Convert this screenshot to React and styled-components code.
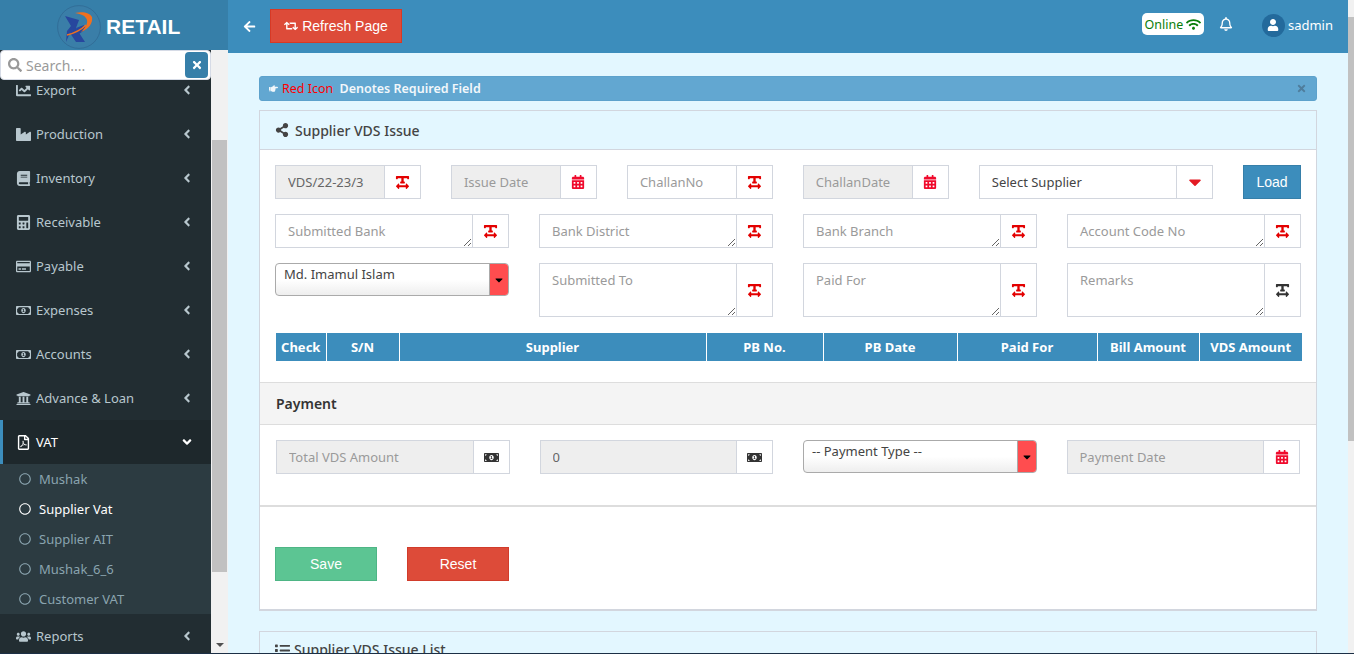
import React from 'react'
import styled, { createGlobalStyle } from 'styled-components'
import {
  FaArrowLeft, FaRetweet, FaWifi, FaRegBell, FaUser, FaSearch, FaTimes, FaChartLine, FaIndustry,
  FaBook, FaCalculator, FaRegCreditCard, FaRegMoneyBillAlt, FaUniversity, FaRegFilePdf, FaUsers,
  FaAngleLeft, FaAngleDown, FaRegCircle, FaShareAlt, FaTextWidth, FaCalendarAlt, FaCaretDown,
  FaMoneyBillAlt, FaList, FaHandPointRight,
} from 'react-icons/fa'

const font = `"Noto Sans", "Liberation Sans", sans-serif`

const GlobalStyle = createGlobalStyle`
  html, body { margin: 0; padding: 0; height: 100%; overflow: hidden; }
  * { box-sizing: border-box; }
  body { font-family: ${font}; font-size: 13px; color: #333; }
  input::placeholder, textarea::placeholder { color: #9a9a9a; opacity: 1; }
`

const menu = [
  { label: 'Export', Icon: FaChartLine },
  { label: 'Production', Icon: FaIndustry },
  { label: 'Inventory', Icon: FaBook },
  { label: 'Receivable', Icon: FaCalculator },
  { label: 'Payable', Icon: FaRegCreditCard },
  { label: 'Expenses', Icon: FaRegMoneyBillAlt },
  { label: 'Accounts', Icon: FaRegMoneyBillAlt },
  { label: 'Advance & Loan', Icon: FaUniversity },
]

const vatItems = ['Mushak', 'Supplier Vat', 'Supplier AIT', 'Mushak_6_6', 'Customer VAT']

const columns = [
  ['Check', 50], ['S/N', 73], ['Supplier', 307], ['PB No.', 117], ['PB Date', 134],
  ['Paid For', 140], ['Bill Amount', 102], ['VDS Amount', 103],
]

const Logo = () => (
  <svg width="44" height="44" viewBox="0 0 44 44">
    <circle cx="22" cy="22" r="21.4" fill="#3a7ea8" stroke="#2f6790" strokeWidth="0.7" />
    <path d="M8 11 L22 15 L19 23 L28 37 L19 37 L13 28 L9 37 L10 26 L14 21 Z" fill="#27479e" />
    <path d="M19 23 L27 20 L29 24 L22 29 Z" fill="#27479e" />
    <path d="M18 8 C26 6 33 8 35 12 C36 18 32 24 24 27 C29 22 32 17 29 13 C27 10 23 9 18 8 Z" fill="#f0701f" />
    <path d="M10 30 C18 28 24 25 29 20" stroke="#f0701f" strokeWidth="1.4" fill="none" />
  </svg>
)

const App = () => (
  <>
    <GlobalStyle />
    <Page>
      <Sidebar>
        <Brand>
          <Logo />
          <BrandName>RETAIL</BrandName>
        </Brand>
        <SidebarBody>
          <SideNav>
            <SearchBox>
              <FaSearch />
              <SearchInput placeholder="Search...." />
              <SearchClear><FaTimes /></SearchClear>
            </SearchBox>
            <MenuList>
              {menu.map(({ label, Icon }) => (
                <MenuItem key={label}>
                  <Icon />
                  <MenuLabel>{label}</MenuLabel>
                  <FaAngleLeft />
                </MenuItem>
              ))}
              <MenuItem $active>
                <FaRegFilePdf />
                <MenuLabel>VAT</MenuLabel>
                <FaAngleDown />
              </MenuItem>
              <SubMenu>
                {vatItems.map((item) => (
                  <SubItem key={item} $current={item === 'Supplier Vat'}>
                    <FaRegCircle />
                    {item}
                  </SubItem>
                ))}
              </SubMenu>
              <MenuItem>
                <FaUsers />
                <MenuLabel>Reports</MenuLabel>
                <FaAngleLeft />
              </MenuItem>
            </MenuList>
          </SideNav>
          <SideScroll>
            <SideThumb />
            <ScrollArrow />
          </SideScroll>
        </SidebarBody>
      </Sidebar>

      <Main>
        <TopBar>
          <BackIcon><FaArrowLeft /></BackIcon>
          <RefreshButton><FaRetweet /> Refresh Page</RefreshButton>
          <TopRight>
            <OnlineBadge>Online <FaWifi /></OnlineBadge>
            <BellIcon><FaRegBell /></BellIcon>
            <UserMenu>
              <Avatar><FaUser /></Avatar>
              sadmin
            </UserMenu>
          </TopRight>
        </TopBar>

        <Content>
          <Alert>
            <FaHandPointRight />
            <RedText>Red Icon</RedText> Denotes Required Field
            <AlertClose><FaTimes /></AlertClose>
          </Alert>

          <Box>
            <BoxHeader><FaShareAlt /> Supplier VDS Issue</BoxHeader>
            <BoxBody>
              <FirstRow>
                <Field placeholder="VDS/22-23/3" readOnly filled icon="text" required dark />
                <Field placeholder="Issue Date" readOnly icon="date" />
                <Field placeholder="ChallanNo" icon="text" required />
                <Field placeholder="ChallanDate" readOnly icon="date" />
                <InputGroup>
                  <SupplierSelect>Select Supplier</SupplierSelect>
                  <Addon><FaCaretDown color="#e31b23" size={20} /></Addon>
                </InputGroup>
                <LoadButton>Load</LoadButton>
              </FirstRow>
              <FourRow>
                <AreaField placeholder="Submitted Bank" required />
                <AreaField placeholder="Bank District" required />
                <AreaField placeholder="Bank Branch" required />
                <AreaField placeholder="Account Code No" required />
              </FourRow>
              <TallRow>
                <ComboBox>
                  <ComboText>Md. Imamul Islam</ComboText>
                  <ComboArrow><FaCaretDown /></ComboArrow>
                </ComboBox>
                <AreaField placeholder="Submitted To" required tall />
                <AreaField placeholder="Paid For" required tall />
                <AreaField placeholder="Remarks" tall />
              </TallRow>
              <DataTable>
                <thead>
                  <tr>
                    {columns.map(([name, width]) => (
                      <th key={name} style={{ width }}>{name}</th>
                    ))}
                  </tr>
                </thead>
              </DataTable>
            </BoxBody>

            <PaymentPanel>
              <PaymentHeader>Payment</PaymentHeader>
              <PaymentBody>
                <Field placeholder="Total VDS Amount" readOnly icon="money" />
                <Field placeholder="0" readOnly icon="money" filled dark />
                <ComboBox>
                  <ComboText>-- Payment Type --</ComboText>
                  <ComboArrow><FaCaretDown /></ComboArrow>
                </ComboBox>
                <Field placeholder="Payment Date" readOnly icon="date" />
              </PaymentBody>
            </PaymentPanel>

            <Actions>
              <ActionButton $bg="#5cc593" $border="#4eb585">Save</ActionButton>
              <ActionButton $bg="#dd4b39" $border="#d13c2b">Reset</ActionButton>
            </Actions>
          </Box>

          <ListBox>
            <ListTitle><FaList /> Supplier VDS Issue List</ListTitle>
          </ListBox>
        </Content>
      </Main>
      <PageScroll>
        <PageThumb />
      </PageScroll>
    </Page>
  </>
)

const Field = ({ placeholder, readOnly, icon, required, dark }) => (
  <InputGroup>
    <TextInput placeholder={placeholder} readOnly={readOnly} $dark={dark} />
    <Addon>
      {icon === 'text' && <FaTextWidth color={required ? '#e30000' : '#333'} size={15} />}
      {icon === 'date' && <FaCalendarAlt color="#f00a2c" size={14} />}
      {icon === 'money' && <FaMoneyBillAlt color="#333" size={15} />}
    </Addon>
  </InputGroup>
)

const AreaField = ({ placeholder, required, tall }) => (
  <InputGroup $tall={tall}>
    <TextArea placeholder={placeholder} />
    <Addon>
      <FaTextWidth color={required ? '#e30000' : '#333'} size={15} />
    </Addon>
  </InputGroup>
)

const Page = styled.div`
  display: flex;
  width: 1354px;
  height: 654px;
  overflow: hidden;
  background: #e3f7ff;
  border-bottom: 1px solid #1c2f45;
`

const Sidebar = styled.aside`
  width: 228px;
  flex: none;
  display: flex;
  flex-direction: column;
  background: #f1f1f1;
`

const Brand = styled.div`
  height: 50px;
  flex: none;
  display: flex;
  align-items: center;
  gap: 5px;
  padding: 3px 0 0 57px;
  background: #367fa9;
`

const BrandName = styled.span`
  font-family: "Liberation Sans", Arial, sans-serif;
  font-size: 21px;
  font-weight: 700;
  color: #fff;
`

const SidebarBody = styled.div`
  flex: 1;
  display: flex;
  min-height: 0;
`

const SideNav = styled.nav`
  width: 211px;
  flex: none;
  background: #222d32;
  display: flex;
  flex-direction: column;
  overflow: hidden;
`

const SearchBox = styled.div`
  flex: none;
  position: relative;
  z-index: 2;
  height: 30px;
  display: flex;
  align-items: center;
  gap: 4px;
  padding: 0 2px 0 7px;
  background: #fff;
  border: 1px solid #d6dbe6;
  border-radius: 4px;
  color: #999;
  font-size: 14px;
`

const SearchInput = styled.input`
  flex: 1;
  min-width: 0;
  border: 0;
  outline: 0;
  padding: 0;
  font: 14px ${font};
  color: #555;
`

const SearchClear = styled.span`
  width: 23px;
  height: 26px;
  display: flex;
  align-items: center;
  justify-content: center;
  background: #367fa9;
  color: #fff;
  font-size: 12px;
  border-radius: 4px;
`

const MenuList = styled.div`
  margin-top: -12px;
  display: flex;
  flex-direction: column;
`

const MenuItem = styled.div`
  flex: none;
  height: 44px;
  display: flex;
  align-items: center;
  padding: 0 18px 0 ${(p) => (p.$active ? 13 : 16)}px;
  font-size: 13px;
  color: ${(p) => (p.$active ? '#fff' : '#b8c7ce')};
  background: ${(p) => (p.$active ? '#1e282c' : 'transparent')};
  border-left: ${(p) => (p.$active ? '3px solid #3c8dbc' : '0')};

  svg:first-child { width: 15px; height: 15px; flex: none; }
  svg:last-child { width: 12px; height: 14px; flex: none; }
`

const MenuLabel = styled.span`
  flex: 1;
  margin-left: 5px;
`

const SubMenu = styled.div`
  display: flex;
  flex-direction: column;
  background: #2c3b41;
`

const SubItem = styled.div`
  height: 30px;
  display: flex;
  align-items: center;
  gap: 8px;
  padding-left: 19px;
  font-size: 13px;
  color: ${(p) => (p.$current ? '#fff' : '#8aa4af')};

  svg { width: 12px; height: 12px; }
`

const SideScroll = styled.div`
  width: 17px;
  flex: none;
  padding: 0 1px;
  display: flex;
  flex-direction: column;
  justify-content: space-between;
  background: #f1f1f1;
`

const SideThumb = styled.div`
  margin-top: 90px;
  height: 432px;
  background: #c1c1c1;
`

const ScrollArrow = styled.div`
  align-self: center;
  margin-bottom: 6px;
  border-left: 4px solid transparent;
  border-right: 4px solid transparent;
  border-top: 4px solid #505050;
`

const Main = styled.main`
  flex: 1;
  min-width: 0;
  display: flex;
  flex-direction: column;
`

const TopBar = styled.header`
  height: 53px;
  flex: none;
  display: flex;
  align-items: center;
  padding: 0 15px 0 15px;
  background: #3c8dbc;
  color: #fff;
`

const BackIcon = styled.span`
  display: flex;
  font-size: 13px;
  margin-right: 14px;
`

const RefreshButton = styled.button`
  width: 132px;
  height: 34px;
  padding: 0;
  margin-top: -1px;
  display: flex;
  align-items: center;
  justify-content: center;
  gap: 4px;
  background: #dd4b39;
  border: 1px solid #d73925;
  color: #fff;
  font: 14px "Liberation Sans", Arial, sans-serif;
`

const TopRight = styled.div`
  margin-left: auto;
  display: flex;
  align-items: center;
`

const OnlineBadge = styled.span`
  height: 22px;
  width: 62px;
  margin-top: -5px;
  display: flex;
  align-items: center;
  justify-content: center;
  gap: 3px;
  background: #fff;
  border-radius: 5px;
  color: #0a7d0a;
  font-size: 12.5px;
  white-space: nowrap;

  svg { width: 15px; height: 13px; }
`

const BellIcon = styled.span`
  display: flex;
  margin: -5px 0 0 15px;
  font-size: 14px;
`

const UserMenu = styled.div`
  display: flex;
  align-items: center;
  gap: 3px;
  margin: -3px 0 0 29px;
  font-size: 13px;
`

const Avatar = styled.span`
  width: 23px;
  height: 23px;
  display: flex;
  align-items: center;
  justify-content: center;
  border-radius: 50%;
  background: #236a9c;
  font-size: 12px;
`

const Content = styled.div`
  flex: 1;
  min-height: 0;
  padding: 23px 31px 0;
  display: flex;
  flex-direction: column;
`

const Alert = styled.div`
  flex: none;
  height: 25px;
  display: flex;
  align-items: center;
  gap: 3px;
  padding: 0 9px 0 8px;
  background: #62a7d1;
  border: 1px solid #5da2cc;
  border-radius: 3px;
  color: #f2f7fb;
  font-size: 12.5px;
  font-weight: 600;
  white-space: pre-wrap;

  & > svg:first-child { width: 11px; height: 9px; }
`

const RedText = styled.span`
  color: #f00;
  font-weight: 400;
`

const AlertClose = styled.span`
  margin-left: auto;
  display: flex;
  color: #4f7d9c;
  font-size: 11px;
`

const Box = styled.section`
  flex: none;
  height: 501px;
  margin-top: 9px;
  background: #fff;
  border: 1px solid #d2d6de;
  border-bottom-width: 2px;
  display: flex;
  flex-direction: column;
`

const BoxHeader = styled.h3`
  margin: 0;
  height: 39px;
  flex: none;
  display: flex;
  align-items: center;
  gap: 6px;
  padding: 0 15px;
  background: #e3f7ff;
  border-bottom: 1px solid #d2d6de;
  font-size: 14px;
  font-weight: 500;
  color: #444;

  svg { width: 14px; height: 14px; }
`

const BoxBody = styled.div`
  padding: 15px 15px 0;
`

const FirstRow = styled.div`
  display: grid;
  grid-template-columns: repeat(4, 1fr) 234.25px 58px;
  gap: 30px;
`

const FourRow = styled.div`
  display: grid;
  grid-template-columns: repeat(4, 1fr);
  gap: 30px;
  margin-top: 15px;
`

const TallRow = styled(FourRow)`
  align-items: start;
`

const InputGroup = styled.div`
  display: flex;
  height: ${(p) => (p.$tall ? 54 : 34)}px;
  min-width: 0;
`

const TextInput = styled.input`
  flex: 1;
  min-width: 0;
  height: 100%;
  padding: 0 12px;
  border: 1px solid #d2d6de;
  border-right: 0;
  outline: 0;
  background: ${(p) => (p.readOnly ? '#eee' : '#fff')};
  font: 13px ${font};
  &::placeholder { color: ${(p) => (p.$dark ? '#666' : '#9a9a9a')}; }
`

const TextArea = styled.textarea`
  flex: 1;
  min-width: 0;
  height: 100%;
  padding: 7px 12px;
  margin: 0;
  border: 1px solid #d2d6de;
  border-right: 0;
  outline: 0;
  resize: both;
  max-width: 100%;
  background: #fff;
  font: 13px ${font};
`

const Addon = styled.span`
  flex: none;
  width: 37px;
  height: 100%;
  display: flex;
  align-items: center;
  justify-content: center;
  background: #fff;
  border: 1px solid #d2d6de;
`

const SupplierSelect = styled.div`
  flex: 1;
  display: flex;
  align-items: center;
  padding: 0 12px;
  background: #fff;
  border: 1px solid #d2d6de;
  border-right: 0;
  font-size: 13px;
  color: #444;
`

const LoadButton = styled.button`
  height: 34px;
  padding: 0;
  background: #3c8dbc;
  border: 1px solid #367fa9;
  color: #fff;
  font: 14px "Liberation Sans", Arial, sans-serif;
`

const ComboBox = styled.div`
  display: flex;
  height: 33px;
  overflow: hidden;
  background: linear-gradient(to bottom, #fff 50%, #eee 100%);
  border: 1px solid #aaa;
  border-radius: 4px;
`

const ComboText = styled.span`
  flex: 1;
  padding: 1px 8px;
  font-size: 13px;
  line-height: 18px;
  color: #444;
`

const ComboArrow = styled.span`
  flex: none;
  width: 19px;
  display: flex;
  align-items: center;
  justify-content: center;
  background: #ff4d4f;
  border-left: 1px solid #aaa;
  color: #000;
  font-size: 12px;
`

const DataTable = styled.table`
  width: 1026px;
  margin: 16px 0 0 1px;
  border-collapse: collapse;
  table-layout: fixed;

  th {
    height: 28px;
    padding: 0;
    background: #3c8dbc;
    border-right: 1px solid #fff;
    color: #fff;
    font-size: 13px;
    font-weight: 700;
    text-align: center;
  }

  th:last-child { border-right: 0; }
`

const PaymentPanel = styled.div`
  height: 125px;
  margin-top: 21px;
  flex: none;
  border-top: 1px solid #ddd;
  border-bottom: 2px solid #ddd;
`

const PaymentHeader = styled.h4`
  margin: 0;
  height: 42px;
  display: flex;
  align-items: center;
  padding: 0 16px;
  background: #f4f4f4;
  border-bottom: 1px solid #ddd;
  font-size: 14px;
  font-weight: 600;
  color: #333;
`

const PaymentBody = styled.div`
  padding: 15px 16px 0;
  display: grid;
  grid-template-columns: repeat(4, 1fr);
  gap: 30px;
  align-items: start;
`

const Actions = styled.div`
  display: flex;
  gap: 30px;
  padding: 40px 15px 0;
`

const ActionButton = styled.button`
  width: 102px;
  height: 34px;
  padding: 0;
  background: ${(p) => p.$bg};
  border: 1px solid ${(p) => p.$border};
  color: #fff;
  font: 14px "Liberation Sans", Arial, sans-serif;
`

const ListBox = styled.section`
  flex: none;
  margin-top: 20px;
  height: 60px;
  border: 1px solid #d2d6de;
`

const ListTitle = styled.h3`
  margin: 0;
  padding: 8px 15px;
  display: flex;
  align-items: center;
  gap: 4px;
  font-size: 14px;
  font-weight: 500;
  color: #444;
  line-height: 20px;

  svg { width: 15px; height: 15px; }
`

const PageScroll = styled.div`
  width: 6px;
  flex: none;
  padding-top: 17px;
  background: #f1f1f1;
`

const PageThumb = styled.div`
  height: 424px;
  background: #c1c1c1;
`

export default App
